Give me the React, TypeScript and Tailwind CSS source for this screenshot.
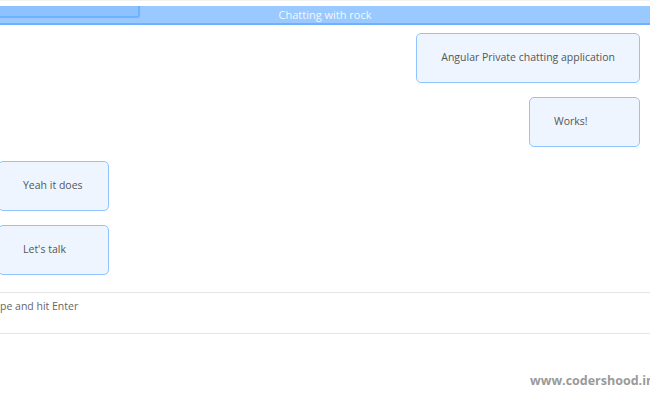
import React from "react";

const font = { fontFamily: '"Open Sans", "Noto Sans", sans-serif' };

function Bubble({ text, side }: { text: string; side: "left" | "right" }) {
  return (
    <div className={side === "right" ? "flex justify-end pr-[10px]" : "flex justify-start ml-[-2px]"}>
      <div className="h-[50px] min-w-[111px] flex items-center px-6 bg-[#eef5ff] border border-[#8fc4ff] rounded-[5px] text-[10.5px] text-[#555]">
        {text}
      </div>
    </div>
  );
}

export default function App() {
  return (
    <div className="w-[650px] h-[400px] bg-white overflow-hidden relative" style={font}>
      <div className="h-[1px] bg-[#f2f2f2]" />
      <div className="mt-[5px] h-[19px] bg-[#99c9ff] border-b-2 border-[#6cb2ff] relative flex items-center justify-center">
        <div className="absolute left-0 top-0 w-[140px] h-[12px] bg-[#8ec2ff] border-b-2 border-r-2 border-[#6cb2ff] rounded-br-[3px]" />
        <span className="text-[11px] text-[#f2f8ff] leading-none">Chatting with rock</span>
      </div>
      <div className="flex flex-col gap-[14px] mt-[8px]">
        <Bubble side="right" text="Angular Private chatting application" />
        <Bubble side="right" text="Works!" />
        <Bubble side="left" text="Yeah it does" />
        <Bubble side="left" text="Let's talk" />
      </div>
      <div className="mt-[17px] h-[42px] border-t border-b border-[#e6e6e6] text-[10.5px] text-[#666] pt-[6px]">
        pe and hit Enter
      </div>
      <div className="flex justify-start pl-[530px] mt-[38px]">
        <span className="text-[12.5px] font-bold text-[#9a9a9a] whitespace-nowrap">www.codershood.in</span>
      </div>
    </div>
  );
}
